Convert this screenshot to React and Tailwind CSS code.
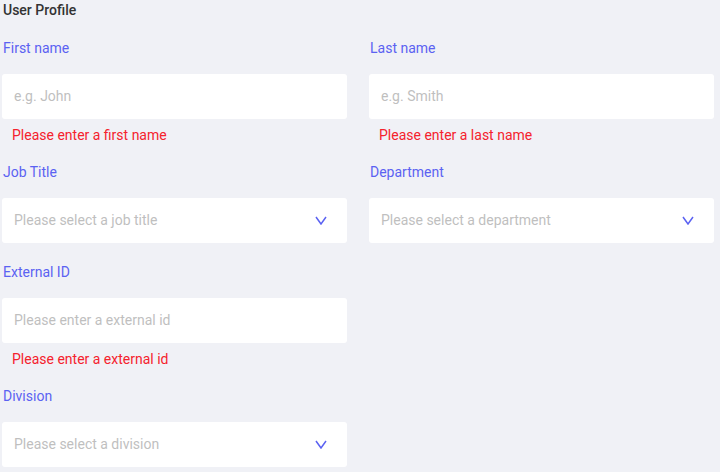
const Field = ({ label, placeholder, error, select }) => {
	return (
		<div className={error ? "flex flex-col mb-[17px]" : "flex flex-col mb-[19px]"}>
			<label className="pl-px text-[14px] leading-5 text-[#5b62f2] mb-4">
				{label}
			</label>
			<div className="h-[45px] bg-white rounded-[3px] flex items-center pl-3 pr-5">
				<span className="text-[14px] text-[#bfbfbf] flex-1">{placeholder}</span>
				{select ?
					<svg width="12" height="9" viewBox="0 0 12 9" fill="none">
						<polyline points="1,1 6,8 11,1" stroke="#5b62f2" strokeWidth="1.5" />
					</svg>
				: null}
			</div>
			{error ?
				<div className="pl-2.5 mt-1.5 text-[14px] leading-5 text-[#f5222d]">
					{error}
				</div>
			: null}
		</div>
	);
};

export default function App() {
	return (
		<div className="w-[720px] h-[472px] overflow-hidden bg-[#f0f1f6] px-0.5 font-['Roboto',sans-serif]">
			<h1 className="text-[14px] font-medium leading-5 text-[#333] pl-px mb-[18px]">User Profile</h1>
			<div className="grid grid-cols-2 gap-x-[22px] w-[712px]">
				<Field label="First name" placeholder="e.g. John" error="Please enter a first name" />
				<Field label="Last name" placeholder="e.g. Smith" error="Please enter a last name" />
				<Field label="Job Title" placeholder="Please select a job title" select />
				<Field label="Department" placeholder="Please select a department" select />
				<Field label="External ID" placeholder="Please enter a external id" error="Please enter a external id" />
				<div />
				<Field label="Division" placeholder="Please select a division" select />
			</div>
		</div>
	);
}
